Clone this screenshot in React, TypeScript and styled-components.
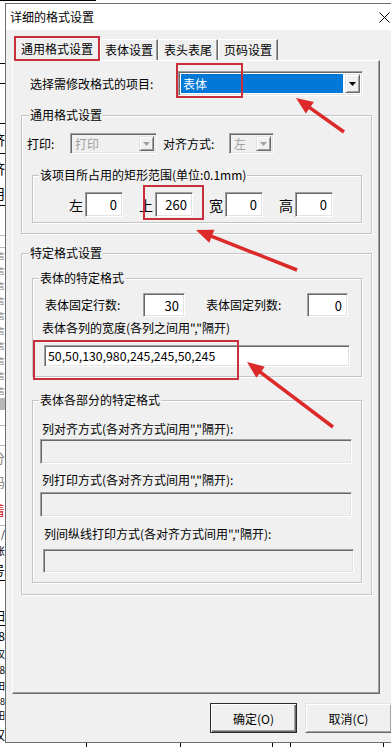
import React from 'react';
import styled, { createGlobalStyle, css } from 'styled-components';

const GlobalStyle = createGlobalStyle`
  html, body {
    margin: 0;
    padding: 0;
    background: #fff;
  }
  body {
    font-family: "Noto Sans CJK SC", "Microsoft YaHei", sans-serif;
    font-size: 12px;
    color: #000;
  }
`;

const sunken = css`
  box-sizing: border-box;
  border-style: solid;
  border-width: 1px;
  border-color: #a0a0a0 #fff #fff #a0a0a0;
  box-shadow: inset 1px 1px #696969, inset -1px -1px #e3e3e3;
`;

const raised = css`
  box-sizing: border-box;
  border-style: solid;
  border-width: 1px;
  border-color: #e3e3e3 #696969 #696969 #e3e3e3;
  box-shadow: inset 1px 1px #fff, inset -1px -1px #a0a0a0;
`;

const Screen = styled.div`
  display: grid;
  width: 391px;
  height: 747px;
  overflow: hidden;
  background: #fff;

  & > * {
    grid-area: 1 / 1;
  }
`;

/* the report window that sits behind the dialog */
const Backdrop = styled.div`
  display: flex;
  flex-direction: column;
  width: 391px;
  height: 747px;
`;

const TopStrip = styled.div`
  height: 3px;
  display: flex;
  align-items: flex-end;
  overflow: hidden;
  border-top: 1px solid #000;
  box-sizing: border-box;
  width: 96px;
`;

const TopText = styled.div`
  height: 3px;
  display: flex;
  align-items: flex-end;
  overflow: hidden;
  padding-left: 196px;
  font-size: 13px;
  white-space: nowrap;
  span {
    line-height: 13px;
  }
`;

const LeftStrip = styled.div`
  display: flex;
  flex-direction: column;
  width: 5px;
  flex: 1;
  overflow: hidden;
`;

const StripCell = styled.div<{ $h: number; $line?: string; $color?: string; $bg?: string; $size?: number }>`
  flex: none;
  height: ${p => p.$h}px;
  box-sizing: border-box;
  border-bottom: ${p => (p.$line ? `1px solid ${p.$line}` : 'none')};
  background: ${p => p.$bg || 'transparent'};
  color: ${p => p.$color || '#000'};
  font-size: ${p => p.$size || 10}px;
  line-height: 1;
  display: flex;
  align-items: center;
  justify-content: flex-end;
  white-space: nowrap;
  overflow: hidden;
`;

const BottomRuler = styled.div`
  flex: none;
  height: 4px;
  display: flex;
  align-items: flex-start;
`;

const Tick = styled.span<{ $gap: number }>`
  width: 1px;
  height: 4px;
  background: #000;
  margin-left: ${p => p.$gap}px;
`;

/* dialog */
const Dialog = styled.div`
  justify-self: start;
  align-self: start;
  margin: 3px 0 0 5px;
  width: 392px;
  height: 740px;
  box-sizing: border-box;
  border: 1px solid #6f6f6f;
  background: #f0f0f0;
  display: flex;
  flex-direction: column;
`;

const TitleBar = styled.div`
  height: 26px;
  flex: none;
  background: #fff;
  display: flex;
  align-items: center;
  justify-content: space-between;
  padding: 0 6px 0 4px;
`;

const TitleText = styled.span`
  font-size: 12px;
  line-height: 16px;
`;

const Body = styled.div`
  display: flex;
  flex-direction: column;
  padding: 6px 0 0 6px;
`;

const TabStrip = styled.div`
  display: flex;
  align-items: flex-end;
  height: 24px;
  padding-left: 2px;
`;

const Tab = styled.div<{ $active?: boolean; $w: number }>`
  box-sizing: border-box;
  width: ${p => p.$w}px;
  height: ${p => (p.$active ? 25 : 21)}px;
  margin-bottom: ${p => (p.$active ? -1 : 0)}px;
  z-index: ${p => (p.$active ? 1 : 0)};
  padding-top: ${p => (p.$active ? 2 : 0)}px;
  background: #f0f0f0;
  border-top: 1px solid #fff;
  border-left: 1px solid #fff;
  border-right: 1px solid #696969;
  box-shadow: inset -1px 0 #a0a0a0;
  text-align: center;
  line-height: 20px;
  font-size: 12px;
`;

const Panel = styled.div`
  box-sizing: border-box;
  width: 368px;
  height: 634px;
  display: flex;
  flex-direction: column;
  border-style: solid;
  border-width: 1px;
  border-color: #fff #696969 #696969 #fff;
  box-shadow: inset -1px -1px #a0a0a0;
`;

const SelectRow = styled.div`
  display: flex;
  align-items: center;
  margin-top: 10px;
  padding-left: 17px;
`;

const RowLabel = styled.span<{ $w: number; $ml?: number }>`
  flex: none;
  width: ${p => p.$w}px;
  margin-left: ${p => p.$ml || 0}px;
  line-height: 16px;
  white-space: nowrap;
`;

const ComboBox = styled.div<{ $w: number; $h: number; $disabled?: boolean }>`
  ${sunken};
  flex: none;
  width: ${p => p.$w}px;
  height: ${p => p.$h}px;
  display: flex;
  padding: 2px;
  background: ${p => (p.$disabled ? '#f0f0f0' : '#fff')};
`;

const ComboValue = styled.div<{ $selected?: boolean; $disabled?: boolean }>`
  flex: 1;
  margin-right: 2px;
  padding-left: 2px;
  display: flex;
  align-items: center;
  background: ${p => (p.$selected ? '#0078d7' : 'transparent')};
  color: ${p => (p.$selected ? '#fff' : p.$disabled ? '#a0a0a0' : '#000')};
  font-size: 12px;
`;

const DropButton = styled.div`
  ${raised};
  flex: none;
  width: 15px;
  display: flex;
  align-items: center;
  justify-content: center;
  background: #f0f0f0;
`;

const Group = styled.fieldset<{ $top: number; $left: number; $width: number; $pb: number }>`
  box-sizing: border-box;
  width: ${p => p.$width}px;
  margin: ${p => p.$top}px 0 0 ${p => p.$left}px;
  padding: 0 0 ${p => p.$pb}px 0;
  min-inline-size: 0;
  border: 1px solid #c4c4c4;
  box-shadow: inset 1px 1px #fff, 1px 1px #fff;
  display: flex;
  flex-direction: column;
`;

const Legend = styled.legend<{ $left: number }>`
  margin-left: ${p => p.$left}px;
  padding: 0 1px;
  line-height: 16px;
  font-size: 12px;
  background: #f0f0f0;
`;

const FieldRow = styled.div<{ $top: number; $pl: number }>`
  display: flex;
  align-items: center;
  margin-top: ${p => p.$top}px;
  padding-left: ${p => p.$pl}px;
`;

const RectRow = styled.div`
  display: flex;
  align-items: center;
  gap: 16px;
  margin-top: 9px;
  padding-left: 36px;
`;

const RectField = styled.div`
  display: flex;
  align-items: center;
  gap: 2px;
`;

const RectLabel = styled.span`
  font-size: 14px;
  line-height: 18px;
`;

const NumBox = styled.div<{ $w: number; $h: number }>`
  ${sunken};
  flex: none;
  width: ${p => p.$w}px;
  height: ${p => p.$h}px;
  background: #fff;
  display: flex;
  align-items: center;
  justify-content: flex-end;
  padding-right: 5px;
  font-size: 13px;
`;

const Hint = styled.div<{ $top: number; $pl: number }>`
  margin-top: ${p => p.$top}px;
  padding-left: ${p => p.$pl}px;
  line-height: 16px;
  white-space: nowrap;
`;

const TextBox = styled.div<{ $top: number; $left: number; $w: number; $h: number; $disabled?: boolean }>`
  ${sunken};
  width: ${p => p.$w}px;
  height: ${p => p.$h}px;
  margin: ${p => p.$top}px 0 0 ${p => p.$left}px;
  background: ${p => (p.$disabled ? '#f0f0f0' : '#fff')};
  display: flex;
  align-items: center;
  padding-left: 3px;
  font-size: 12.3px;
`;

const ButtonRow = styled.div`
  display: flex;
  gap: 8px;
  margin-top: 9px;
  padding-left: 198px;
`;

const DialogButton = styled.div<{ $default?: boolean }>`
  ${raised};
  width: 87px;
  height: 30px;
  display: flex;
  align-items: center;
  justify-content: center;
  background: #f0f0f0;
  font-size: 12px;
  ${p =>
    p.$default &&
    css`
      border-color: #2b2b2b;
      box-shadow: inset 1px 1px #fff, inset -1px -1px #696969, inset -2px -2px #a0a0a0;
    `}
`;

const Overlay = styled.svg`
  width: 391px;
  height: 747px;
  pointer-events: none;
  z-index: 2;
`;

const Caret = ({ color }: { color: string }) => (
  <svg width="7" height="4" viewBox="0 0 7 4">
    <path d="M0 0h7L3.5 4z" fill={color} />
  </svg>
);

const CloseIcon = () => (
  <svg width="11" height="11" viewBox="0 0 11 11">
    <path d="M0.5 0.5L10.5 10.5M10.5 0.5L0.5 10.5" stroke="#000" strokeWidth="1" />
  </svg>
);

const Arrow = ({ x1, y1, x2, y2 }: { x1: number; y1: number; x2: number; y2: number }) => {
  const dx = x2 - x1;
  const dy = y2 - y1;
  const len = Math.hypot(dx, dy);
  const ux = dx / len;
  const uy = dy / len;
  const bx = x2 - ux * 17;
  const by = y2 - uy * 17;
  const head = [
    `${x2},${y2}`,
    `${bx - uy * 7},${by + ux * 7}`,
    `${bx + uy * 7},${by - ux * 7}`,
  ].join(' ');
  return (
    <g fill="#dc2a2a" stroke="#dc2a2a">
      <line x1={x1} y1={y1} x2={bx + ux * 2} y2={by + uy * 2} strokeWidth="3.5" />
      <polygon points={head} strokeWidth="0" />
    </g>
  );
};

const strip = [
  { h: 58, line: '#000' },
  { h: 20, line: '#000' },
  { h: 40, line: '#000' },
  { h: 30, ch: '济', line: '#000', size: 14 },
  { h: 27, ch: '济', size: 14 },
  { h: 25, ch: '用', line: '#000', size: 14 },
  { h: 30, line: '#bbb' },
  { h: 12, line: '#bbb' },
  ...Array.from({ length: 10 }, () => ({ h: 15, ch: '言', color: '#777', size: 8 })),
  { h: 12, bg: '#b8b8b8' },
  { h: 16, line: '#bbb' },
  { h: 20, line: '#bbb' },
  { h: 23, ch: '分', color: '#888', size: 13 },
  { h: 25, ch: '码', color: '#888', size: 13 },
  { h: 32, ch: '着', color: '#d02020', line: '#bbb', size: 13 },
  { h: 16, ch: '/' },
  { h: 17, ch: '账' },
  { h: 22, ch: '号', line: '#000', size: 13 },
  { h: 25 },
  { h: 20, ch: '田', line: '#000', size: 12 },
  { h: 20, ch: '8', size: 12 },
  { h: 16, ch: '汉' },
  { h: 16, ch: '8' },
  { h: 16, ch: '田' },
  { h: 14, ch: '8', size: 9 },
  { h: 14, ch: '田', size: 9 },
  { h: 26, ch: '汉', line: '#000', size: 12 },
];

const tabs = [
  { label: '通用格式设置', w: 86 },
  { label: '表体设置', w: 58 },
  { label: '表头表尾', w: 60 },
  { label: '页码设置', w: 60 },
];

const rect = [
  { label: '左', value: '0' },
  { label: '上', value: '260' },
  { label: '宽', value: '0' },
  { label: '高', value: '0' },
];

export default function App() {
  return (
    <>
      <GlobalStyle />
      <Screen>
        <Backdrop>
          <TopStrip />
          <TopText>
            <span>日期:　　　　第1页，共17页</span>
          </TopText>
          <LeftStrip>
            {strip.map((c, i) => (
              <StripCell key={i} $h={c.h} $line={c.line} $color={c.color} $bg={c.bg} $size={c.size}>
                {c.ch}
              </StripCell>
            ))}
          </LeftStrip>
          <BottomRuler>
            <Tick $gap={86} />
            <Tick $gap={93} />
            <Tick $gap={91} />
            <Tick $gap={17} />
            <Tick $gap={92} />
          </BottomRuler>
        </Backdrop>

        <Dialog>
          <TitleBar>
            <TitleText>详细的格式设置</TitleText>
            <CloseIcon />
          </TitleBar>
          <Body>
            <TabStrip>
              {tabs.map((t, i) => (
                <Tab key={t.label} $active={i === 0} $w={t.w}>
                  {t.label}
                </Tab>
              ))}
            </TabStrip>
            <Panel>
              <SelectRow>
                <RowLabel $w={148}>选择需修改格式的项目:</RowLabel>
                <ComboBox $w={185} $h={25}>
                  <ComboValue $selected>表体</ComboValue>
                  <DropButton>
                    <Caret color="#000" />
                  </DropButton>
                </ComboBox>
              </SelectRow>

              <Group $top={11} $left={8} $width={351} $pb={10}>
                <Legend $left={7}>通用格式设置</Legend>
                <FieldRow $top={10} $pl={5}>
                  <RowLabel $w={43}>打印:</RowLabel>
                  <ComboBox $w={87} $h={21} $disabled>
                    <ComboValue $disabled>打印</ComboValue>
                    <DropButton>
                      <Caret color="#a0a0a0" />
                    </DropButton>
                  </ComboBox>
                  <RowLabel $w={66} $ml={6}>对齐方式:</RowLabel>
                  <ComboBox $w={45} $h={21} $disabled>
                    <ComboValue $disabled>左</ComboValue>
                    <DropButton>
                      <Caret color="#a0a0a0" />
                    </DropButton>
                  </ComboBox>
                </FieldRow>

                <Group $top={13} $left={10} $width={330} $pb={5}>
                  <Legend $left={6}>该项目所占用的矩形范围(单位:0.1mm)</Legend>
                  <RectRow>
                    {rect.map(r => (
                      <RectField key={r.label}>
                        <RectLabel>{r.label}</RectLabel>
                        <NumBox $w={38} $h={25}>
                          {r.value}
                        </NumBox>
                      </RectField>
                    ))}
                  </RectRow>
                </Group>
              </Group>

              <Group $top={11} $left={8} $width={351} $pb={11}>
                <Legend $left={7}>特定格式设置</Legend>

                <Group $top={9} $left={10} $width={330} $pb={9}>
                  <Legend $left={6}>表体的特定格式</Legend>
                  <FieldRow $top={7} $pl={12}>
                    <RowLabel $w={98}>表体固定行数:</RowLabel>
                    <NumBox $w={42} $h={24}>
                      30
                    </NumBox>
                    <RowLabel $w={101} $ml={21}>
                      表体固定列数:
                    </RowLabel>
                    <NumBox $w={41} $h={24}>
                      0
                    </NumBox>
                  </FieldRow>
                  <Hint $top={3} $pl={9}>
                    表体各列的宽度(各列之间用","隔开)
                  </Hint>
                  <TextBox $top={9} $left={11} $w={306} $h={22}>
                    50,50,130,980,245,245,50,245
                  </TextBox>
                </Group>

                <Group $top={15} $left={10} $width={330} $pb={9}>
                  <Legend $left={6}>表体各部分的特定格式</Legend>
                  <Hint $top={13} $pl={9}>
                    列对齐方式(各对齐方式间用","隔开):
                  </Hint>
                  <TextBox $top={2} $left={7} $w={312} $h={25} $disabled />
                  <Hint $top={8} $pl={9}>
                    列打印方式(各对齐方式间用","隔开):
                  </Hint>
                  <TextBox $top={4} $left={7} $w={312} $h={25} $disabled />
                  <Hint $top={9} $pl={11}>
                    列间纵线打印方式(各对齐方式间用","隔开):
                  </Hint>
                  <TextBox $top={7} $left={10} $w={311} $h={24} $disabled />
                </Group>
              </Group>
            </Panel>

            <ButtonRow>
              <DialogButton $default>确定(O)</DialogButton>
              <DialogButton>取消(C)</DialogButton>
            </ButtonRow>
          </Body>
        </Dialog>

        <Overlay viewBox="0 0 391 747">
          <g fill="none" stroke="#c9303b" strokeWidth="2">
            <rect x="15" y="37" width="84" height="23" />
            <rect x="177" y="64" width="65" height="33" />
            <rect x="144" y="186" width="59" height="33" />
            <rect x="34" y="341" width="204" height="38" />
          </g>
          <Arrow x1={344} y1={132} x2={296} y2={98} />
          <Arrow x1={297} y1={270} x2={196} y2={230} />
          <Arrow x1={333} y1={427} x2={247} y2={362} />
        </Overlay>
      </Screen>
    </>
  );
}
